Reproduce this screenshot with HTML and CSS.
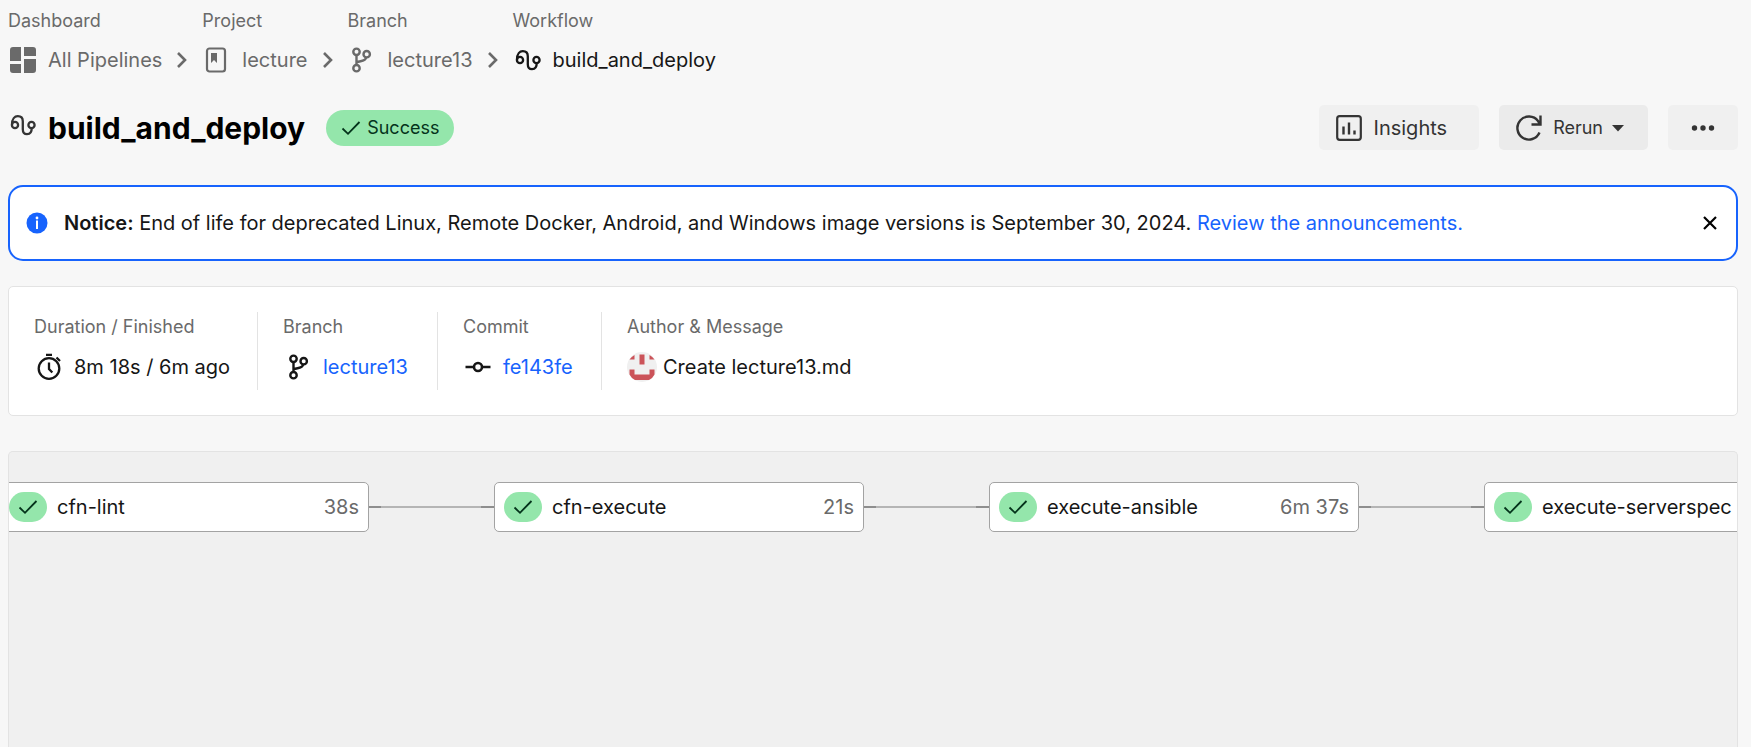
FILE: index.html
```html
<!DOCTYPE html>
<html lang="en">
<head>
<meta charset="utf-8">
<title>build_and_deploy</title>
<link rel="stylesheet" href="styles.css">
</head>
<body>
<svg class="sprite" aria-hidden="true">
  <symbol id="branch" viewBox="0 0 30 30">
    <g fill="none" stroke="currentColor" stroke-width="2.4">
      <circle cx="8.500" cy="6.800" r="3.200"/><circle cx="18.700" cy="9.200" r="3.200"/><circle cx="8.500" cy="23.200" r="3.200"/>
      <path d="M8.500 10v10M18.200 12.500c-.8 4-5.500 3.200-9.500 4.800"/>
    </g>
  </symbol>
  <symbol id="workflow" viewBox="0 0 30 30">
    <g fill="none" stroke="currentColor" stroke-width="2.300">
      <circle cx="7" cy="15" r="3.100"/><circle cx="23.500" cy="15" r="3.100"/>
      <path d="M4 14.500C4 8.500 6.800 6.200 9.800 6.200c3.200 0 5 2 5 5v8c0 3.400 1.500 5 4.200 5 3.500 0 4.800-2.600 4.700-6.300"/>
    </g>
  </symbol>
  <symbol id="chevron" viewBox="0 0 30 30">
    <path d="M11 8l7 7-7 7" fill="none" stroke="currentColor" stroke-width="2.600"/>
  </symbol>
  <symbol id="check" viewBox="0 0 20 20">
    <path d="M1.500 10.500l5.500 5.300L18.500 4" fill="none" stroke="currentColor" stroke-width="1.800"/>
  </symbol>
</svg>

<nav aria-label="Breadcrumb">
  <ol class="crumbs">
    <li class="crumb">
      <span class="label">Dashboard</span>
      <span class="crumb-row">
        <a class="crumb-link" href="#"><svg class="icon" viewBox="0 0 30 30" aria-hidden="true"><g fill="currentColor"><path d="M5 2h8v14H2V5a3 3 0 0 1 3-3zM16 2h9a3 3 0 0 1 3 3v6H16zM2 19h11v9H5a3 3 0 0 1-3-3zM16 14h12v11a3 3 0 0 1-3 3h-9z"/></g></svg>All Pipelines</a>
        <svg class="icon" aria-hidden="true"><use href="#chevron"/></svg>
      </span>
    </li>
    <li class="crumb">
      <span class="label">Project</span>
      <span class="crumb-row">
        <a class="crumb-link" href="#"><svg class="icon" viewBox="0 0 30 30" aria-hidden="true"><rect x="5" y="3.500" width="18" height="23" rx="2.500" fill="none" stroke="currentColor" stroke-width="2.200"/><path d="M9 8h6v10l-3-3-3 3z" fill="currentColor"/></svg>lecture</a>
        <svg class="icon" aria-hidden="true"><use href="#chevron"/></svg>
      </span>
    </li>
    <li class="crumb">
      <span class="label">Branch</span>
      <span class="crumb-row">
        <a class="crumb-link" href="#"><svg class="icon" aria-hidden="true"><use href="#branch"/></svg>lecture13</a>
        <svg class="icon" aria-hidden="true"><use href="#chevron"/></svg>
      </span>
    </li>
    <li class="crumb">
      <span class="label">Workflow</span>
      <span class="crumb-row">
        <a class="crumb-link current" href="#" aria-current="page"><svg class="icon" aria-hidden="true"><use href="#workflow"/></svg>build_and_deploy</a>
      </span>
    </li>
  </ol>
</nav>

<header class="header">
  <h1 class="title"><svg class="icon" aria-hidden="true"><use href="#workflow"/></svg>build_and_deploy</h1>
  <span class="status"><svg class="status-icon" aria-hidden="true"><use href="#check"/></svg>Success</span>
  <div class="actions">
    <button class="button" type="button"><svg class="icon" viewBox="0 0 30 30" aria-hidden="true"><rect x="3.200" y="3.200" width="23.600" height="23.600" rx="2.500" fill="none" stroke="currentColor" stroke-width="2.200"/><path d="M9.500 13.500v8M15 9.500v12M20.500 17.500v4" stroke="currentColor" stroke-width="2.400"/></svg>Insights</button>
    <button class="button rerun" type="button"><svg class="icon" viewBox="0 0 30 30" aria-hidden="true"><path d="M25.500 19.500A11.500 11.500 0 1 1 24 8l2 3M26.500 2.500v9h-9" fill="none" stroke="currentColor" stroke-width="2.400"/></svg>Rerun<svg class="caret" viewBox="0 0 12 8" aria-hidden="true"><path d="M0 1h12L6 7.500z" fill="currentColor"/></svg></button>
    <button class="button more" type="button" aria-label="More actions"><svg class="icon" viewBox="0 0 30 30" aria-hidden="true"><g fill="currentColor"><circle cx="6.500" cy="15" r="2.700"/><circle cx="15" cy="15" r="2.700"/><circle cx="23.500" cy="15" r="2.700"/></g></svg></button>
  </div>
</header>

<section class="notice" aria-label="Notice">
  <svg class="info" viewBox="0 0 22 22" aria-hidden="true"><circle cx="11" cy="11" r="10.500" fill="#1763fd"/><circle cx="11" cy="6" r="1.400" fill="#fff"/><path d="M11 8.500v8.500" stroke="#fff" stroke-width="2"/></svg>
  <p class="notice-text"><strong>Notice:</strong> End of life for deprecated Linux, Remote Docker, Android, and Windows image versions is September 30, 2024. <a class="link" href="#">Review the announcements.</a></p>
  <button class="close" type="button" aria-label="Dismiss"><svg class="close-icon" viewBox="0 0 14 14" aria-hidden="true"><path d="M1 1l12 12M13 1L1 13" stroke="currentColor" stroke-width="2.200"/></svg></button>
</section>

<section class="summary" aria-label="Summary">
  <div class="fact">
    <span class="label">Duration / Finished</span>
    <span class="fact-value"><svg class="icon" viewBox="0 0 30 30" aria-hidden="true"><g fill="none" stroke="currentColor" stroke-width="2.300"><circle cx="15" cy="16.500" r="10.300"/><path d="M15 10.500v6.500l3.300 3.500M12 2.800h6M22.500 5.500l3.500 3.500"/></g></svg>8m 18s / 6m ago</span>
  </div>
  <div class="fact">
    <span class="label">Branch</span>
    <span class="fact-value"><svg class="icon branch-icon" aria-hidden="true" viewBox="-2 0 30 30"><use href="#branch" width="30" height="30"/></svg><a class="link" href="#">lecture13</a></span>
  </div>
  <div class="fact">
    <span class="label">Commit</span>
    <span class="fact-value"><svg class="icon" viewBox="0 0 30 30" aria-hidden="true"><g fill="none" stroke="currentColor" stroke-width="2.600"><circle cx="15" cy="15" r="4"/><path d="M2.500 15H11M19 15h8.500"/></g></svg><a class="link" href="#">fe143fe</a></span>
  </div>
  <div class="fact">
    <span class="label">Author &amp; Message</span>
    <span class="fact-value author"><svg class="icon" viewBox="0 0 30 30" role="img" aria-label="Author"><circle cx="15" cy="15" r="15" fill="#f0f0f0"/><path d="M7.500 3v4.500H2.500Q4.500 4.500 7.500 3zM22.500 3v4.500h5Q25.500 4.500 22.500 3zM12.500 2.500h5v10h-5zM2.500 17.500h5v5h15v-5h5v5q-2 4-5.500 5.500H8q-3.500-1.500-5.500-5.500z" fill="#cb5359"/></svg>Create lecture13.md</span>
  </div>
</section>

<main class="map">
  <ol class="jobs">
    <li class="job"><span class="job-status"><svg class="status-icon" aria-hidden="true"><use href="#check"/></svg></span><a class="job-name" href="#">cfn-lint</a><span class="job-time">38s</span></li>
    <li class="edge" aria-hidden="true"></li>
    <li class="job"><span class="job-status"><svg class="status-icon" aria-hidden="true"><use href="#check"/></svg></span><a class="job-name" href="#">cfn-execute</a><span class="job-time">21s</span></li>
    <li class="edge" aria-hidden="true"></li>
    <li class="job"><span class="job-status"><svg class="status-icon" aria-hidden="true"><use href="#check"/></svg></span><a class="job-name" href="#">execute-ansible</a><span class="job-time">6m 37s</span></li>
    <li class="edge" aria-hidden="true"></li>
    <li class="job"><span class="job-status"><svg class="status-icon" aria-hidden="true"><use href="#check"/></svg></span><a class="job-name" href="#">execute-serverspec</a></li>
  </ol>
</main>
</body>
</html>
```

FILE: styles.css
```css
* { box-sizing: border-box; }

body {
  display: flex;
  flex-direction: column;
  min-height: 100vh;
  margin: 0;
  padding: 9px 13px 0 8px;
  background: #f7f7f7;
  color: #161616;
  font: 20px/30px Inter, "Liberation Sans", sans-serif;
}

a { color: inherit; text-decoration: none; }
ol { margin: 0; padding: 0; list-style: none; }
button { border: 0; font: inherit; color: inherit; cursor: pointer; }

.sprite { position: absolute; width: 0; height: 0; }
.icon { flex: none; width: 30px; height: 30px; }
.link { color: #1763fd; }
.label { color: #6a6a6a; font-size: 18px; line-height: 24px; }

.crumbs { display: flex; gap: 5px; }
.crumb { display: flex; flex-direction: column; gap: 11px; color: #6a6a6a; }
.crumb-row { display: flex; align-items: center; gap: 5px; height: 32px; }
.crumb-link { display: flex; align-items: center; gap: 10px; }
.current { color: #161616; }

.header { display: flex; align-items: center; margin-top: 29px; }
.title {
  display: flex;
  align-items: flex-start;
  gap: 10px;
  margin: 0;
  color: #000;
  font-size: 30px;
  font-weight: 700;
  line-height: 36px;
}
.title .icon { color: #343434; }
.status {
  display: flex;
  align-items: center;
  gap: 6px;
  height: 36px;
  margin-left: 21px;
  padding: 0 15px;
  border-radius: 18px;
  background: #94e6ab;
  color: #04331b;
  font-size: 18px;
}
.status-icon { flex: none; width: 20px; height: 20px; }
.actions { display: flex; gap: 20px; margin-left: auto; }
.button {
  display: flex;
  align-items: center;
  gap: 10px;
  height: 45px;
  padding: 0 32px 0 15px;
  border-radius: 5px;
  background: #f0f0f0;
  color: #343434;
}
.rerun { gap: 9px; padding: 0 24px 0 15px; background: #ebebeb; font-size: 18px; }
.more { padding: 0 20px; }
.caret { width: 12px; height: 8px; }

.notice {
  display: flex;
  align-items: center;
  margin-top: 35px;
  padding: 21px 19px 21px 16px;
  border: 2px solid #1763fd;
  border-radius: 15px;
  background: #fff;
}
.info { flex: none; width: 22px; height: 22px; margin-right: 16px; }
.notice-text { flex: 1; margin: 0; }
.notice-text strong { font-weight: 600; }
.close { display: flex; padding: 0; background: none; color: #000; }
.close-icon { width: 14px; height: 14px; }

.summary {
  display: grid;
  grid-template-columns: 248px 180px 164px 1fr;
  margin-top: 25px;
  padding: 25px 0;
  border: 1px solid #e3e3e3;
  border-radius: 5px;
  background: #fff;
}
.fact { display: flex; flex-direction: column; gap: 10px; padding: 0 25px 8px; }
.fact + .fact { border-left: 1px solid #e3e3e3; }
.fact .label { line-height: 30px; }
.fact-value { display: flex; gap: 10px; white-space: nowrap; }
.author { gap: 6px; }

.map {
  flex: 1;
  margin-top: 35px;
  padding-top: 30px;
  overflow: hidden;
  border: 1px solid #e3e3e3;
  border-bottom: 0;
  border-radius: 5px 5px 0 0;
  background: #f0f0f0;
}
.jobs { display: flex; align-items: center; margin-left: -10px; }
.job {
  display: flex;
  flex: none;
  align-items: center;
  gap: 10px;
  width: 370px;
  height: 50px;
  padding: 0 9px;
  border: 1px solid #a3a3a3;
  border-radius: 5px;
  background: #fff;
}
.job-status {
  display: flex;
  align-items: center;
  justify-content: center;
  width: 38px;
  height: 30px;
  border-radius: 15px;
  background: #94e6ab;
  color: #04331b;
}
.job-name { flex: 1; white-space: nowrap; }
.job-time { color: #6a6a6a; }
.edge {
  flex: none;
  width: 125px;
  height: 2px;
  background: linear-gradient(to right, #8e8e8e 12px, #b5b5b5 12px, #b5b5b5 112px, #8e8e8e 112px);
}
```
